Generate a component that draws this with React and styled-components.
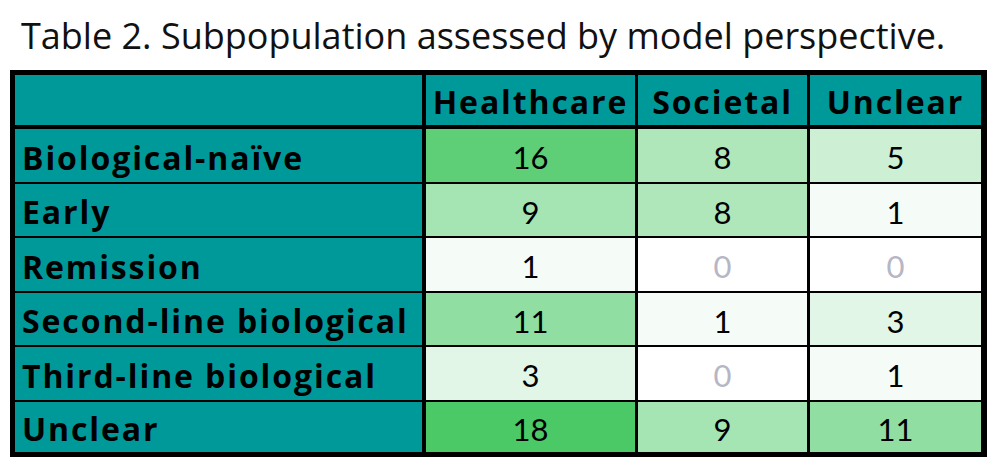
import React from 'react';
import styled, { createGlobalStyle } from 'styled-components';

const GlobalStyle = createGlobalStyle`
    html, body {
        margin: 0;
        padding: 0;
        background: #ffffff;
    }
`;

const Page = styled.div`
    width: 1000px;
    height: 470px;
    box-sizing: border-box;
    padding: 14px 13px 0 10px;
    font-family: Lato, 'Liberation Sans', sans-serif;
    color: #000;
`;

const Caption = styled.div`
    font-family: 'Open Sans', Lato, sans-serif;
    font-size: 36px;
    line-height: 44px;
    margin: 0 0 12px 11px;
    white-space: nowrap;
    color: #111;
`;

const Table = styled.div`
    width: 977px;
    box-sizing: border-box;
    background: #000;
    border: 5px solid #000;
    display: grid;
    grid-template-columns: 408px 209px 169px 171px;
    grid-template-rows: 52px 53px 52px 53px 52px 53px 50px;
    column-gap: 3px;
    row-gap: 2px;
`;

const Cell = styled.div`
    display: flex;
    align-items: center;
    justify-content: ${(p) => (p.$label ? 'flex-start' : 'center')};
    padding: ${(p) => (p.$label ? '3px 0 0 7px' : '3px 0 0 0')};
    box-sizing: border-box;
    white-space: nowrap;
    font-family: ${(p) => (p.$bold ? "'Open Sans', Lato, sans-serif" : "Lato, 'Liberation Sans', sans-serif")};
    font-size: ${(p) => (p.$bold ? '32px' : '31px')};
    font-weight: ${(p) => (p.$bold ? 700 : 400)};
    letter-spacing: ${(p) => (p.$bold ? '1.9px' : '0')};
    color: ${(p) => (p.$muted ? '#b6b6c4' : '#000')};
    background: ${(p) => p.$bg || '#009999'};
`;

const HeadCell = styled(Cell)`
    border-bottom: 2px solid #000;
    padding-bottom: 0;
`;

const FirstCol = styled.div`
    display: contents;
    & > * {
        margin-right: 1px;
    }
`;

const rows = [
    ['Biological-naïve', 16, 8, 5],
    ['Early', 9, 8, 1],
    ['Remission', 1, 0, 0],
    ['Second-line biological', 11, 1, 3],
    ['Third-line biological', 3, 0, 1],
    ['Unclear', 18, 9, 11],
];

// white -> green scale, like the spreadsheet colour rule
const shade = (v) => {
    const t = v / 18;
    const mix = (to) => Math.round(255 - t * (255 - to));
    return `rgb(${mix(74)}, ${mix(201)}, ${mix(102)})`;
};

function App() {
    return (
        <Page>
            <GlobalStyle />
            <Caption>Table 2. Subpopulation assessed by model perspective.</Caption>
            <Table>
                <FirstCol>
                    <HeadCell $label />
                </FirstCol>
                <HeadCell $bold>Healthcare</HeadCell>
                <HeadCell $bold>Societal</HeadCell>
                <HeadCell $bold>Unclear</HeadCell>
                {rows.map(([name, ...vals]) => (
                    <React.Fragment key={name}>
                        <FirstCol>
                            <Cell $label $bold>
                                {name}
                            </Cell>
                        </FirstCol>
                        {vals.map((v, i) => (
                            <Cell key={i} $bg={shade(v)} $muted={v === 0}>
                                {v}
                            </Cell>
                        ))}
                    </React.Fragment>
                ))}
            </Table>
        </Page>
    );
}

export default App;
